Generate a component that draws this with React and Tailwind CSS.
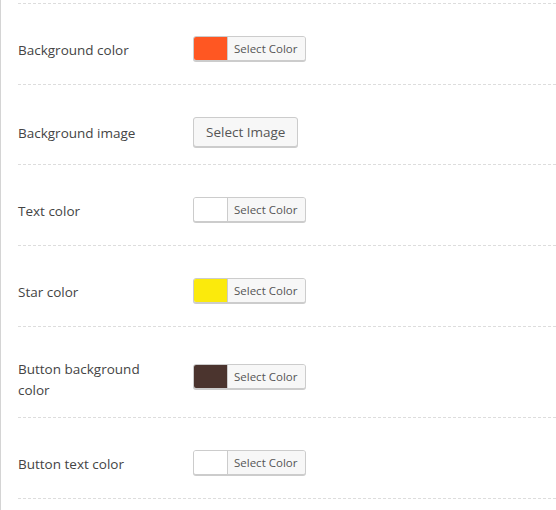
import React from "react";

const font = { fontFamily: '"Open Sans", "Noto Sans", sans-serif' };

function ColorButton({ color }) {
  return (
    <div className="flex h-[25px] w-[113px] mb-[7px] rounded-[3px] border border-[#cccccc] shadow-[0_1px_0_#cccccc] overflow-hidden bg-[#f7f7f7]">
      <div className="w-[33px] h-full" style={{ backgroundColor: color }} />
      <div className="flex-1 flex items-center border-l border-[#cccccc] bg-[#f7f7f7] pl-[6px] text-[11.5px] leading-[23px] text-[#555555]">
        Select Color
      </div>
    </div>
  );
}

function Row({ label, children, h = "min-h-[81px]", lc = "mb-[4px]" }) {
  return (
    <div className={`flex items-center pt-[32px] pb-[16px] border-b border-dashed border-[#dddddd] ${h}`}>
      <div className={`w-[175px] pr-[25px] text-[13.5px] leading-[21px] text-[#444444] ${lc}`}>{label}</div>
      {children}
    </div>
  );
}

export default function App() {
  return (
    <div className="min-h-screen bg-white border-l border-[#d4d4d4] pl-[17px]" style={font}>
      <div className="h-[4px] border-b border-dashed border-[#dddddd]" />
      <Row label="Background color">
        <ColorButton color="#ff5722" />
      </Row>
      <Row label="Background image" h="min-h-[80px]" lc="mt-[2px]">
        <button className="h-[30px] mb-[1px] px-[12px] rounded-[3px] border border-[#cccccc] bg-[#f7f7f7] shadow-[0_1px_0_#cccccc] text-[13.5px] leading-[28px] text-[#555555]">
          Select Image
        </button>
      </Row>
      <Row label="Text color">
        <ColorButton color="#ffffff" />
      </Row>
      <Row label="Star color">
        <ColorButton color="#fbea0c" />
      </Row>
      <Row label="Button background color" lc="">
        <ColorButton color="#4b342e" />
      </Row>
      <Row label="Button text color">
        <ColorButton color="#ffffff" />
      </Row>
    </div>
  );
}
